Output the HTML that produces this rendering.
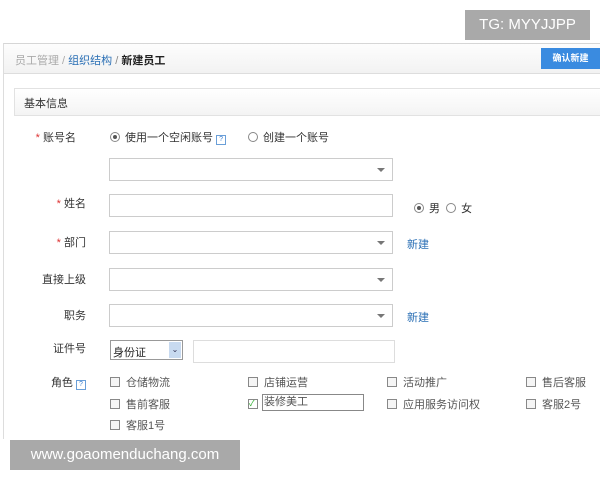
<!DOCTYPE html>
<html><head><meta charset="utf-8"><style>
body{margin:0;width:600px;height:480px;background:#fff;position:relative;overflow:hidden;font-family:"Liberation Sans","Noto Sans CJK SC",sans-serif;font-size:11px;color:#333}
.a{position:absolute}
.inp{position:absolute;border:1px solid #ccc;background:#fff;box-sizing:border-box}
.arr{position:absolute;right:7px;top:9px;width:0;height:0;border-left:4px solid transparent;border-right:4px solid transparent;border-top:4px solid #777}
.lbl{position:absolute;width:86px;text-align:right;font-size:11px;color:#333}
.star{color:#d33}
.cb{position:absolute;font-size:11px;color:#555}
.cb i{display:inline-block;width:8px;height:8px;border:1px solid #888;margin-right:6px;vertical-align:-1px;background:#f5f5f5}
.q{display:inline-block;width:8px;height:8px;border:1px solid #6a9fd8;color:#3b7fd0;font-size:7px;line-height:8px;text-align:center;font-style:normal;vertical-align:0}
.rad{display:inline-block;width:8px;height:8px;border:1px solid #888;border-radius:50%;vertical-align:-1px;margin-right:5px;position:relative}
.rad.on:after{content:"";position:absolute;left:2px;top:2px;width:4px;height:4px;border-radius:50%;background:#555}
.blue{color:#2a6fb5}
</style></head><body>
<div class="a" style="left:465px;top:10px;width:125px;height:30px;background:#a9a9a9;color:#fff;font-size:15px;line-height:30px;text-align:center">TG: MYYJJPP</div>
<div class="a" style="left:3px;top:43px;width:597px;height:395px;border-top:1px solid #d6d6d6;border-left:1px solid #ddd"></div>
<div class="a" style="left:4px;top:44px;width:596px;height:29px;background:linear-gradient(#fdfdfd,#f2f2f2);border-bottom:1px solid #ddd"></div>
<div class="a" style="left:15px;top:52px;font-size:11px;color:#aaa">员工管理 / <span class="blue">组织结构</span> <span style="color:#888">/</span> <b style="color:#222">新建员工</b></div>
<div class="a" style="left:541px;top:48px;width:59px;height:21px;background:#3a8be0;color:#fff;font-size:9px;line-height:21px;text-align:center;font-weight:bold">确认新建</div>
<div class="a" style="left:14px;top:88px;width:586px;height:28px;border:1px solid #e2e2e2;border-right:none;background:linear-gradient(#fff,#f4f4f4);box-sizing:border-box"></div>
<div class="a" style="left:24px;top:95px;font-size:11px">基本信息</div>

<div class="lbl" style="left:-10px;top:129px"><span class="star">*</span> 账号名</div>
<div class="a" style="left:110px;top:129px;color:#333"><span class="rad on"></span>使用一个空闲账号 <i class="q">?</i></div>
<div class="a" style="left:248px;top:129px;color:#333"><span class="rad"></span>创建一个账号</div>
<div class="inp" style="left:109px;top:158px;width:284px;height:23px"><div class="arr"></div></div>

<div class="lbl" style="left:0;top:195px"><span class="star">*</span> 姓名</div>
<div class="inp" style="left:109px;top:194px;width:284px;height:23px"></div>
<div class="a" style="left:414px;top:200px"><span class="rad on"></span>男 &nbsp;<span class="rad"></span>女</div>

<div class="lbl" style="left:0;top:234px"><span class="star">*</span> 部门</div>
<div class="inp" style="left:109px;top:231px;width:284px;height:23px"><div class="arr"></div></div>
<div class="a blue" style="left:407px;top:236px">新建</div>

<div class="lbl" style="left:0;top:271px">直接上级</div>
<div class="inp" style="left:109px;top:268px;width:284px;height:23px"><div class="arr"></div></div>

<div class="lbl" style="left:0;top:307px">职务</div>
<div class="inp" style="left:109px;top:304px;width:284px;height:23px"><div class="arr"></div></div>
<div class="a blue" style="left:407px;top:309px">新建</div>

<div class="lbl" style="left:0;top:340px">证件号</div>
<div class="inp" style="left:110px;top:340px;width:73px;height:20px;border-color:#999"><span style="position:absolute;left:2px;top:3px;color:#222">身份证</span><div style="position:absolute;right:1px;top:1px;width:12px;height:16px;background:#c8daf0;font-size:8px;text-align:center;line-height:16px;color:#335">⌄</div></div>
<div class="inp" style="left:193px;top:340px;width:202px;height:23px;border-color:#ddd"></div>

<div class="lbl" style="left:0;top:374px">角色 <i class="q">?</i></div>
<div class="cb" style="left:110px;top:374px"><i></i>仓储物流</div>
<div class="cb" style="left:248px;top:374px"><i></i>店铺运营</div>
<div class="cb" style="left:387px;top:374px"><i></i>活动推广</div>
<div class="cb" style="left:526px;top:374px"><i></i>售后客服</div>
<div class="cb" style="left:110px;top:396px"><i></i>售前客服</div>
<div class="cb" style="left:248px;top:396px"><i style="background:#fff;font-style:normal;font-size:8px;line-height:8px;color:#2a2">✓</i></div>
<div class="a" style="left:262px;top:394px;width:102px;height:17px;border:1px solid #888;box-sizing:border-box;color:#555;padding-left:1px;line-height:15px">装修美工</div>
<div class="cb" style="left:387px;top:396px"><i></i>应用服务访问权</div>
<div class="cb" style="left:526px;top:396px"><i></i>客服2号</div>
<div class="cb" style="left:110px;top:417px"><i></i>客服1号</div>

<div class="a" style="left:10px;top:440px;width:230px;height:30px;background:#a9a9a9;color:#fff;font-size:15px;line-height:30px;text-align:center">www.goaomenduchang.com</div>
</body></html>
